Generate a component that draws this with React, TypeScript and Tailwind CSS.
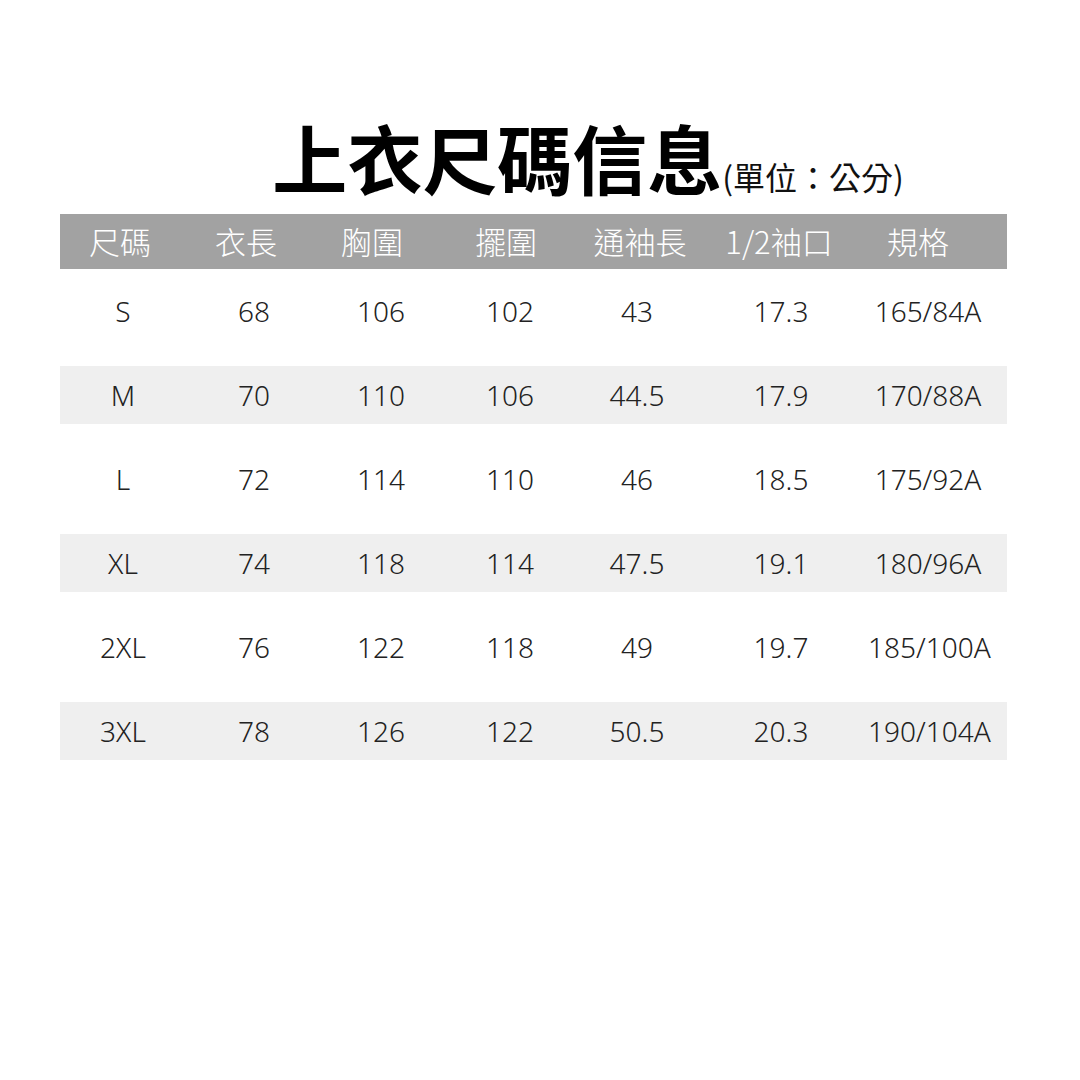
const headers = ["尺碼", "衣長", "胸圍", "擺圍", "通袖長", "1/2袖口", "規格"];

const rows = [
  ["S", "68", "106", "102", "43", "17.3", "165/84A"],
  ["M", "70", "110", "106", "44.5", "17.9", "170/88A"],
  ["L", "72", "114", "110", "46", "18.5", "175/92A"],
  ["XL", "74", "118", "114", "47.5", "19.1", "180/96A"],
  ["2XL", "76", "122", "118", "49", "19.7", "185/100A"],
  ["3XL", "78", "126", "122", "50.5", "20.3", "190/104A"],
];

// column centers in the picture don't sit on an even grid, and the header is offset from the data
const headCols = "grid grid-cols-[120px_132px_120px_148px_120px_158px_120px]";
const dataCols = "grid grid-cols-[126px_136px_118px_140px_114px_174px_120px]";

const App = () => {
  return (
    <div className="w-[1080px] h-[1080px] bg-white font-['Noto_Sans','Noto_Sans_CJK_TC',sans-serif]">
      <div className="pt-[112px] flex items-end justify-center pl-[96px]">
        <h1 className="text-[75px] leading-[90px] font-bold text-black font-['Noto_Sans_CJK_TC',sans-serif]">
          上衣尺碼信息
        </h1>
        <span className="text-[32px] leading-[40px] mb-[6px] text-[#111] font-['Noto_Sans_CJK_TC',sans-serif]">
          (單位：公分)
        </span>
      </div>

      <div className="mx-[60px] w-[947px] mt-[12px]">
        <div className={`${headCols} h-[55px] items-center bg-[#a2a2a2] text-white text-[31px] font-light font-['Noto_Sans_CJK_TC',sans-serif]`}>
          {headers.map((h) => (
            <div key={h} className="text-center whitespace-nowrap">
              {h}
            </div>
          ))}
        </div>

        <div className="mt-[13px] flex flex-col gap-[26px]">
          {rows.map((r, ri) => (
            <div
              key={r[0]}
              className={`${dataCols} h-[58px] items-center text-[28px] font-light text-[#222] font-['Noto_Sans',sans-serif] ${
                ri % 2 === 1 ? "bg-[#efefef]" : ""
              }`}
            >
              {r.map((c, ci) => (
                <div key={ci} className="text-center whitespace-nowrap">
                  {c}
                </div>
              ))}
            </div>
          ))}
        </div>
      </div>
    </div>
  );
};

export default App;
